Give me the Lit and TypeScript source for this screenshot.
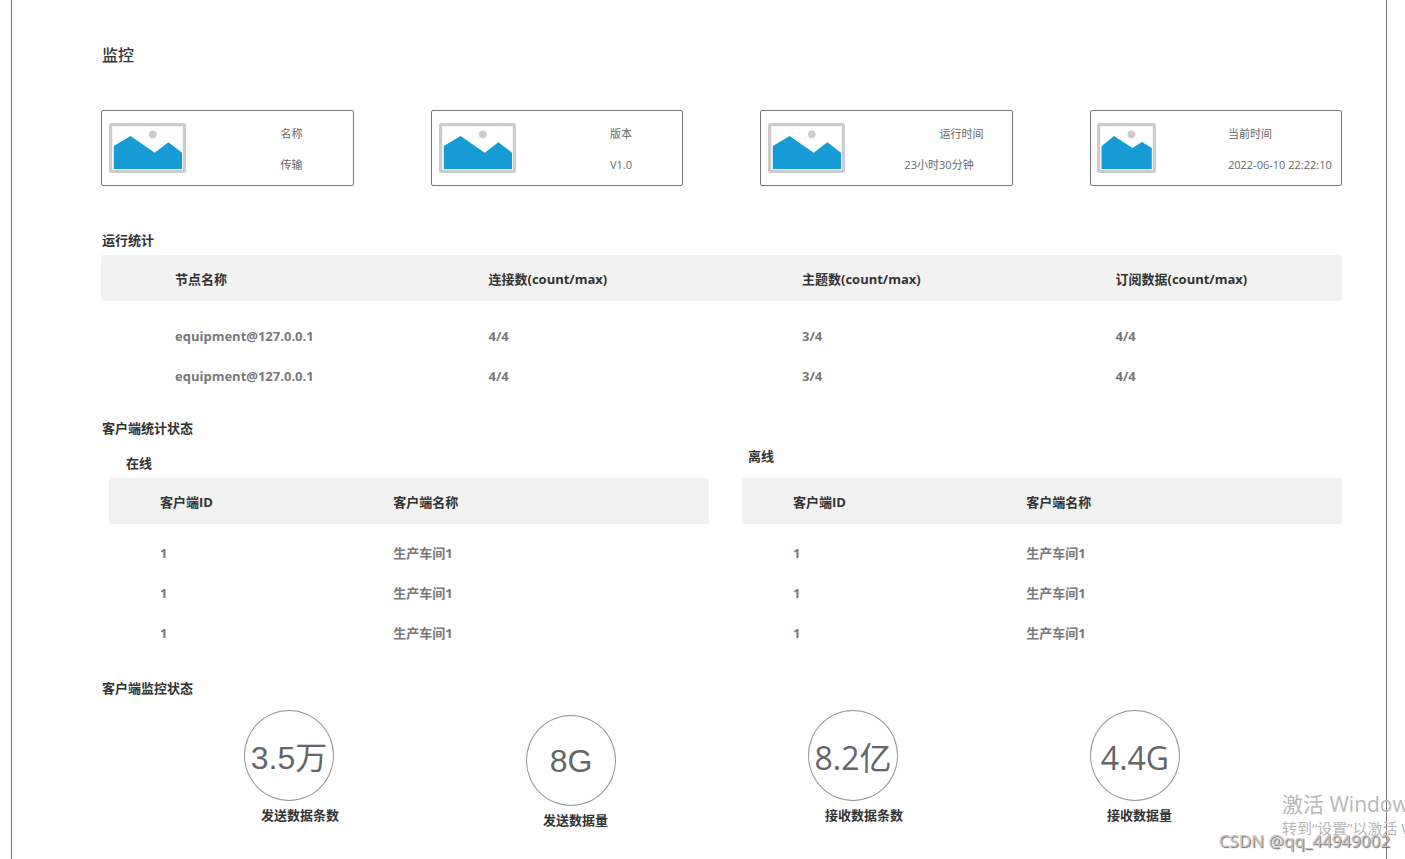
import { LitElement, html, css, svg } from "lit";
import { customElement } from "lit/decorators.js";
import { classMap } from "lit/directives/class-map.js";

interface InfoCard {
  label: string;
  value: string;
  layout: "short" | "offset" | "long";
}

const cards: InfoCard[] = [
  { label: "名称", value: "传输", layout: "short" },
  { label: "版本", value: "V1.0", layout: "short" },
  { label: "运行时间", value: "23小时30分钟", layout: "offset" },
  { label: "当前时间", value: "2022-06-10 22:22:10", layout: "long" },
];

const nodeColumns = ["节点名称", "连接数(count/max)", "主题数(count/max)", "订阅数据(count/max)"];
const nodeRows = [
  ["equipment@127.0.0.1", "4/4", "3/4", "4/4"],
  ["equipment@127.0.0.1", "4/4", "3/4", "4/4"],
];

const clientColumns = ["客户端ID", "客户端名称"];
const clientRows = [
  ["1", "生产车间1"],
  ["1", "生产车间1"],
  ["1", "生产车间1"],
];

const metrics = [
  { value: "3.5万", label: "发送数据条数", arial: true, lowered: false },
  { value: "8G", label: "发送数据量", arial: true, lowered: true },
  { value: "8.2亿", label: "接收数据条数", arial: false, lowered: false },
  { value: "4.4G", label: "接收数据量", arial: false, lowered: false },
];

const picture = (narrow: boolean) => {
  const w = narrow ? 59 : 77;
  const points = narrow
    ? "4.5,23.3 17,13 35.5,25 45,19 54.8,25 54.8,46 4.5,46"
    : "4.8,23 21.6,13 45.7,29.7 59.4,19.2 73,29.7 73,46 4.8,46";
  return html`<svg class="picture" width=${w} height="50" viewBox="0 0 ${w} 50" aria-hidden="true">
    ${svg`
      <rect x="1.5" y="1.5" width=${w - 3} height="47" rx="1" fill="#fff" stroke="#ccc" stroke-width="3"></rect>
      <rect x="3.5" y="3.5" width=${w - 7} height="43" fill="none" stroke="#f4f4f4"></rect>
      <circle cx=${narrow ? 34.4 : 43.8} cy="11.3" r="3.9" fill="#ccc"></circle>
      <polygon points=${points} fill="#169bd5"></polygon>
    `}
  </svg>`;
};

@customElement("app-root")
export class AppRoot extends LitElement {
  static styles = css`
    :host {
      display: block;
      position: relative;
      overflow: hidden;
      background: #fff;
      color: #333;
      font: 13px/20px "Open Sans", "Noto Sans CJK SC", sans-serif;
    }
    * {
      box-sizing: border-box;
    }
    .frame {
      min-height: 100vh;
      margin: 0 18px 0 11px;
      padding: 45px 44px 20px 89px;
      border: solid #797979;
      border-width: 0 1px;
    }
    h1,
    h2,
    h3,
    p,
    dl,
    dd {
      margin: 0;
    }
    h1 {
      padding-left: 1px;
      font-size: 16px;
      line-height: 20px;
      font-weight: 500;
    }
    h2,
    h3 {
      font-size: 13px;
      line-height: 18px;
      font-weight: 700;
    }
    h2 {
      padding: 0 0 2px 1px;
    }
    .cards {
      display: grid;
      grid-template-columns: repeat(4, minmax(0, 1fr));
      gap: 77px;
      margin: 45px 0;
    }
    .card {
      display: flex;
      justify-content: space-between;
      align-items: center;
      height: 76px;
      padding-left: 7px;
      border: 1px solid #797979;
      border-radius: 2px;
      color: #666;
    }
    .long {
      padding-left: 6px;
    }
    .picture {
      display: block;
      flex: none;
    }
    .info {
      display: grid;
      gap: 11px;
      width: 72px;
      padding-top: 2px;
      font-size: 11px;
      white-space: nowrap;
    }
    .offset .info {
      width: 107px;
    }
    .offset dt {
      padding-left: 35px;
    }
    .long .info {
      width: 113px;
    }
    table,
    thead,
    tbody {
      display: block;
    }
    tr {
      display: grid;
      align-items: center;
      height: 40px;
    }
    th,
    td {
      padding: 0;
      text-align: left;
      font-weight: 700;
      white-space: nowrap;
    }
    thead tr {
      height: 46px;
      padding-top: 1px;
      background: #f2f2f2;
      border-radius: 2px;
    }
    td {
      color: #797979;
    }
    .nodes {
      margin: 4px 0 23px;
    }
    .nodes tr {
      grid-template-columns: repeat(4, minmax(0, 1fr));
      gap: 87px;
      padding-left: 74px;
    }
    .nodes tbody {
      padding-top: 15px;
    }
    .panels {
      display: grid;
      grid-template-columns: repeat(2, minmax(0, 1fr));
      gap: 33px;
      align-items: end;
      margin: 8px 0 26px 8px;
    }
    .clients tr {
      grid-template-columns: 17fr 23fr;
      padding-left: 51px;
    }
    .clients tbody {
      padding-top: 9px;
    }
    .online h3 {
      padding: 0 0 6px 17px;
    }
    .offline h3 {
      padding: 0 0 13px 6px;
    }
    .metrics {
      display: flex;
      justify-content: space-between;
      align-items: flex-start;
      padding: 11px 162px 0 143px;
    }
    .metric {
      width: 90px;
    }
    .lowered {
      padding-top: 5px;
    }
    .circle {
      display: flex;
      align-items: center;
      justify-content: center;
      height: 91px;
      padding-top: 4px;
      border: 1px solid #979797;
      border-radius: 50%;
      color: #666;
      font-size: 32px;
      white-space: nowrap;
    }
    .lowered .circle {
      padding-top: 0;
    }
    .arial {
      font-family: "Liberation Sans", "Noto Sans CJK SC", sans-serif;
    }
    .caption {
      padding: 4px 0 0 17px;
      font-weight: 700;
      white-space: nowrap;
    }
    .activation {
      position: absolute;
      right: 0;
      bottom: 20px;
      width: 123px;
      overflow: hidden;
      color: #b8b8b8;
      font-size: 15px;
      line-height: 22px;
      white-space: nowrap;
      pointer-events: none;
    }
    .activation strong {
      display: block;
      font-size: 21px;
      line-height: 26px;
      font-weight: 400;
    }
    .credit {
      position: absolute;
      right: 15px;
      bottom: 8px;
      color: #c4c4c4;
      font-family: "Noto Sans", sans-serif;
      font-size: 17px;
      text-shadow: 1px 1px 1px #666;
      pointer-events: none;
    }
  `;

  private table(kind: string, label: string, columns: string[], rows: string[][]) {
    return html`<table class=${kind} aria-label=${label}>
      <thead>
        <tr>${columns.map((c) => html`<th scope="col">${c}</th>`)}</tr>
      </thead>
      <tbody>
        ${rows.map((r) => html`<tr>${r.map((v) => html`<td>${v}</td>`)}</tr>`)}
      </tbody>
    </table>`;
  }

  render() {
    return html`
      <main class="frame">
        <h1>监控</h1>
        <section class="cards">
          ${cards.map(
            (c) => html`<article class="card ${c.layout}">
              ${picture(c.layout === "long")}
              <dl class="info"><dt>${c.label}</dt><dd>${c.value}</dd></dl>
            </article>`
          )}
        </section>
        <h2>运行统计</h2>
        ${this.table("nodes", "运行统计", nodeColumns, nodeRows)}
        <h2>客户端统计状态</h2>
        <div class="panels">
          <section class="online">
            <h3>在线</h3>
            ${this.table("clients", "在线", clientColumns, clientRows)}
          </section>
          <section class="offline">
            <h3>离线</h3>
            ${this.table("clients", "离线", clientColumns, clientRows)}
          </section>
        </div>
        <h2>客户端监控状态</h2>
        <section class="metrics">
          ${metrics.map(
            (m) => html`<div class=${classMap({ metric: true, lowered: m.lowered })}>
              <div class=${classMap({ circle: true, arial: m.arial })}>${m.value}</div>
              <p class="caption">${m.label}</p>
            </div>`
          )}
        </section>
      </main>
      <div class="activation"><strong>激活 Windows</strong>转到“设置”以激活 Windows。</div>
      <div class="credit">CSDN @qq_44949002</div>
    `;
  }
}
